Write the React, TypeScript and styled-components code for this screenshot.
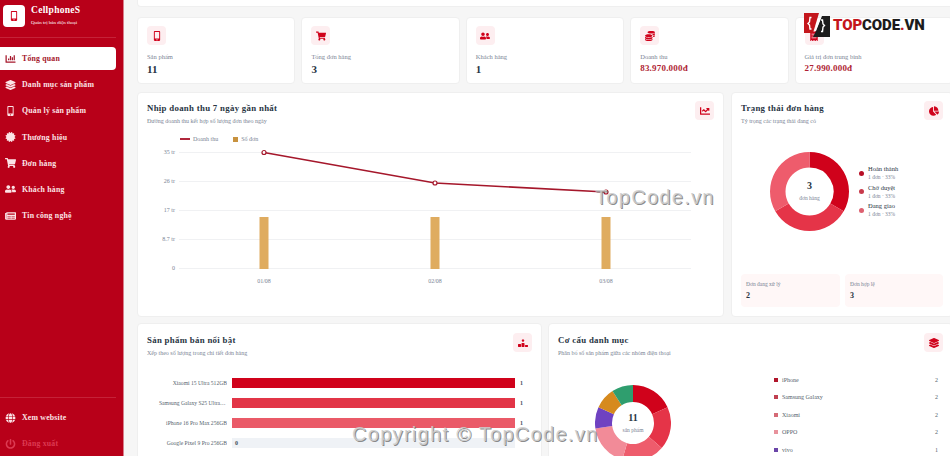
import { createGlobalStyle, styled } from 'styled-components';
import { ReactNode } from 'react';
import {
  FaChartBar, FaChartLine, FaChartPie, FaCoins, FaGlobe, FaLayerGroup, FaMobileAlt,
  FaNewspaper, FaPowerOff, FaShoppingCart, FaUserFriends, FaCertificate, FaReceipt,
} from 'react-icons/fa';
import { FaRankingStar } from 'react-icons/fa6';

const RED = '#d0021b';
const TEXT = '#283443';
const MUTED = '#7a8494';

const Global = createGlobalStyle`
  html, body { margin: 0; padding: 0; background: #f6f6f6; }
  * { box-sizing: border-box; }
  body { font-family: "Liberation Serif", "Noto Serif", serif; color: ${TEXT}; }
`;

const Page = styled.div`
  position: relative;
  width: 950px;
  height: 456px;
  overflow: hidden;
  display: flex;
  align-items: flex-start;
  background: #f6f6f6;
`;

const Sidebar = styled.aside`
  flex: 0 0 124px;
  height: 456px;
  background: #b80019;
  border-right: 1px solid #d8808c;
  display: flex;
  flex-direction: column;
  color: #fff;
`;
const Brand = styled.div`
  height: 38px;
  margin-right: 7px;
  padding: 5px 0 0 3px;
  display: flex;
  gap: 6px;
  border-bottom: 1px solid #c52238;
`;
const BrandIcon = styled.div`
  width: 22px;
  height: 22px;
  background: #fff;
  border-radius: 4px;
  color: ${RED};
  font-size: 10px;
  display: flex;
  align-items: center;
  justify-content: center;
`;
const BrandName = styled.div`
  font-size: 9.5px;
  font-weight: bold;
  letter-spacing: 0.3px;
  line-height: 11px;
`;
const BrandSub = styled.div`
  margin-top: 3px;
  font-size: 5px;
  line-height: 7px;
`;
const Nav = styled.nav`
  flex: 1;
  padding-top: 9px;
  display: flex;
  flex-direction: column;
  gap: 3.2px;
`;
const NavItem = styled.div<{ $active?: boolean; $dim?: boolean }>`
  width: 116px;
  height: 23px;
  padding-left: 5px;
  border-radius: 0 4px 4px 0;
  display: flex;
  align-items: center;
  gap: 6px;
  font-size: 7.8px;
  font-weight: bold;
  letter-spacing: 0.2px;
  background: ${(p) => (p.$active ? '#fff' : 'transparent')};
  color: ${(p) => (p.$active ? '#a5172b' : p.$dim ? '#dc3a52' : '#fbe3e6')};
  svg { flex: 0 0 11px; width: 11px; height: 10px; }
`;
const SideFoot = styled.div`
  margin-right: 7px;
  padding: 8px 0 1px;
  border-top: 1px solid #c52238;
  display: flex;
  flex-direction: column;
  gap: 3px;
`;

const Main = styled.main`
  flex: 0 0 816px;
  margin-left: 13px;
  display: flex;
  flex-direction: column;
`;
const Card = styled.section`
  flex: none;
  background: #fff;
  border: 1px solid #efefef;
  border-radius: 4px;
`;
const TopBar = styled(Card)`
  height: 7px;
  border-radius: 0 0 4px 4px;
  border-top: 0;
  margin-bottom: 10px;
`;
const StatGrid = styled.div`
  display: grid;
  grid-template-columns: repeat(5, 1fr);
  gap: 6px;
  margin-bottom: 8px;
`;
const StatCard = styled(Card)`
  height: 67px;
  padding: 8px 9px;
`;
const IconTile = styled.div`
  flex: none;
  width: 19px;
  height: 19px;
  background: #fdeef0;
  border-radius: 4px;
  color: ${RED};
  display: flex;
  align-items: center;
  justify-content: center;
  font-size: 10px;
`;
const StatLabel = styled.div`
  margin-top: 7px;
  font-size: 6.5px;
  line-height: 9px;
  color: ${MUTED};
`;
const StatValue = styled.div<{ $money?: boolean }>`
  margin-top: ${(p) => (p.$money ? 1 : 2)}px;
  font-size: ${(p) => (p.$money ? 9 : 11)}px;
  line-height: 12px;
  font-weight: bold;
  letter-spacing: 0.2px;
  color: ${(p) => (p.$money ? '#b01f35' : TEXT)};
`;
const ChartRow = styled.div`
  display: grid;
  grid-template-columns: 587px 222px;
  gap: 7px;
  margin-bottom: 6px;
`;
const ChartCard = styled(Card)`
  height: 225px;
  padding: 8px 9px 0;
  display: flex;
  flex-direction: column;
`;
const BottomRow = styled.div`
  display: grid;
  grid-template-columns: 405px 405px;
  gap: 6px;
`;
const BottomCard = styled(Card)`
  height: 160px;
  padding: 9px 9px 0;
`;
const CardHead = styled.header`
  display: flex;
  justify-content: space-between;
  align-items: flex-start;
`;
const CardTitle = styled.h2`
  margin: 1px 0 0;
  font-size: 8.8px;
  line-height: 12px;
  font-weight: bold;
  letter-spacing: 0.3px;
`;
const CardSub = styled.p`
  margin: 3px 0 0;
  font-size: 6px;
  line-height: 9px;
  color: ${MUTED};
`;
const Legend = styled.div`
  padding-left: 33px;
  margin-top: 8px;
  height: 10px;
  display: flex;
  align-items: center;
  gap: 15px;
`;
const LegendItem = styled.span`
  display: flex;
  align-items: center;
  gap: 3px;
  font-size: 6px;
  color: ${MUTED};
`;
const LineKey = styled.i`
  width: 10px;
  height: 2px;
  background: #b0283c;
`;
const SquareKey = styled.i<{ $color: string }>`
  width: 5px;
  height: 5px;
  background: ${(p) => p.$color};
`;
const ChartSvg = styled.svg`
  display: block;
  margin-left: -9px;
  flex: none;
`;
const AxisText = styled.text`
  font-size: 6px;
  fill: ${MUTED};
`;

const StatusBody = styled.div`
  flex: 1;
  display: flex;
  align-items: center;
  padding: 0 0 18px 29px;
`;
const DonutWrap = styled.div<{ $size: number }>`
  position: relative;
  flex: 0 0 ${(p) => p.$size}px;
  width: ${(p) => p.$size}px;
  height: ${(p) => p.$size}px;
`;
const DonutCentre = styled.div`
  position: absolute;
  inset: 0;
  display: flex;
  flex-direction: column;
  align-items: center;
  justify-content: center;
`;
const DonutNum = styled.b`
  font-size: 10px;
  line-height: 12px;
`;
const DonutCap = styled.span`
  margin-top: 3px;
  font-size: 5.5px;
  line-height: 7px;
  color: ${MUTED};
`;
const StatusList = styled.div`
  margin: 1px 0 0 10px;
  display: flex;
  flex-direction: column;
  gap: 2.5px;
`;
const StatusRow = styled.div`
  display: flex;
  align-items: center;
  gap: 4px;
`;
const Dot = styled.i<{ $color: string }>`
  width: 5px;
  height: 5px;
  border-radius: 50%;
  background: ${(p) => p.$color};
`;
const StatusName = styled.div`
  font-size: 6.5px;
  line-height: 8px;
`;
const StatusMeta = styled.div`
  font-size: 5.5px;
  line-height: 8px;
  color: ${MUTED};
`;
const MiniRow = styled.div`
  display: grid;
  grid-template-columns: 99px 98px;
  gap: 5px;
  margin: 0 0 9px;
`;
const MiniBox = styled.div`
  height: 33px;
  padding: 6px 5px;
  background: #fff7f7;
  border-radius: 4px;
`;
const MiniLabel = styled.div`
  font-size: 5.5px;
  line-height: 8px;
  color: ${MUTED};
`;
const MiniValue = styled.div`
  margin-top: 3px;
  font-size: 8px;
  line-height: 9px;
  font-weight: bold;
`;

const Bars = styled.div`
  margin-top: 20px;
  display: flex;
  flex-direction: column;
  gap: 10px;
`;
const BarRow = styled.div`
  display: grid;
  grid-template-columns: 80px 283px 1fr;
  gap: 5px;
  align-items: center;
  height: 10px;
`;
const BarLabel = styled.div`
  padding-left: 12px;
  font-size: 5.6px;
  text-align: right;
  white-space: nowrap;
  overflow: hidden;
  text-overflow: ellipsis;
  color: #555f6d;
`;
const BarTrack = styled.div`
  height: 10px;
  background: #eff2f6;
  display: flex;
  align-items: center;
`;
const BarFill = styled.div<{ $color: string }>`
  height: 10px;
  background: ${(p) => p.$color};
`;
const BarValue = styled.span`
  font-size: 6px;
  font-weight: bold;
  color: #444e5c;
`;
const BarZero = styled(BarValue)`
  margin-left: 3px;
`;

const MixBody = styled.div`
  display: flex;
  margin-top: 17px;
`;
const MixChart = styled.div`
  flex: 0 0 216px;
  padding: 10px 0 0 37px;
`;
const MixList = styled.div`
  flex: 1;
  padding-right: 5px;
  display: flex;
  flex-direction: column;
  gap: 7.4px;
`;
const MixRow = styled.div`
  height: 10px;
  display: flex;
  align-items: center;
  gap: 4px;
  font-size: 6px;
  color: #555f6d;
`;
const MixSwatch = styled.i<{ $color: string }>`
  width: 4px;
  height: 4px;
  background: ${(p) => p.$color};
`;
const MixCount = styled.span`
  margin-left: auto;
`;

const LogoMark = styled.div`
  position: absolute;
  left: 804px;
  top: 12px;
  display: flex;
  align-items: center;
  gap: 3px;
`;
const LogoText = styled.span`
  font-family: Roboto, "Liberation Sans", sans-serif;
  font-weight: 900;
  font-size: 15px;
  letter-spacing: -0.1px;
  color: #1c1c1c;
  b { color: #c4161c; font-weight: 900; }
`;
const Watermark = styled.div<{ $x: number; $y: number }>`
  position: absolute;
  left: ${(p) => p.$x}px;
  top: ${(p) => p.$y}px;
  font-family: "Liberation Sans", Arial, sans-serif;
  font-size: 20px;
  letter-spacing: 1.3px;
  line-height: 1.2;
  white-space: nowrap;
  color: rgba(205, 205, 205, 0.9);
  text-shadow: 1px 1px 0 rgba(110, 110, 110, 0.8);
`;

const polar = (cx: number, cy: number, r: number, deg: number) => {
  const a = ((deg - 90) * Math.PI) / 180;
  return [cx + r * Math.cos(a), cy + r * Math.sin(a)];
};

const Donut = ({ size, inner, parts, children }: { size: number; inner: number; parts: { v: number; c: string }[]; children: ReactNode }) => {
  const total = parts.reduce((s, p) => s + p.v, 0);
  const c = size / 2;
  let at = 0;
  return (
    <DonutWrap $size={size}>
      <svg width={size} height={size} viewBox={`0 0 ${size} ${size}`}>
        {parts.map((p, i) => {
          const from = at;
          at += (p.v / total) * 360;
          const [x1, y1] = polar(c, c, c, from);
          const [x2, y2] = polar(c, c, c, at);
          const [x3, y3] = polar(c, c, inner, at);
          const [x4, y4] = polar(c, c, inner, from);
          const large = at - from > 180 ? 1 : 0;
          return (
            <path
              key={i}
              fill={p.c}
              d={`M${x1} ${y1}A${c} ${c} 0 ${large} 1 ${x2} ${y2}L${x3} ${y3}A${inner} ${inner} 0 ${large} 0 ${x4} ${y4}Z`}
            />
          );
        })}
      </svg>
      <DonutCentre>{children}</DonutCentre>
    </DonutWrap>
  );
};

const TopcodeIcon = () => (
  <svg width="26" height="26" viewBox="0 0 26 26">
    <path d="M0 1H15L9 21H0Z" fill="#c4161c" />
    <path d="M18 4H26V25H9L12 19Z" fill="#1c1c1c" />
    <path d="M7.5 5.5H6L5.5 10L4 11.5L5.5 13L6 17H7.5" fill="none" stroke="#fff" strokeWidth="1.4" />
    <path d="M16 6L11 19" fill="none" stroke="#fff" strokeWidth="1.4" />
    <path d="M17 8H18.5L19 12L20.5 13.5L19 15L18.5 19.5H17" fill="none" stroke="#fff" strokeWidth="1.4" />
  </svg>
);

const RevenueChart = () => {
  const grid = [
    { y: 8, t: '35 tr' },
    { y: 37, t: '26 tr' },
    { y: 66, t: '17 tr' },
    { y: 95, t: '8.7 tr' },
    { y: 124, t: '0' },
  ];
  const pts = [
    { x: 126, y: 8.5, d: '01/08' },
    { x: 297, y: 39, d: '02/08' },
    { x: 468, y: 48, d: '03/08' },
  ];
  return (
    <ChartSvg width="587" height="150" viewBox="0 0 587 150">
      {grid.map((g) => (
        <g key={g.t}>
          <line x1="41" x2="553" y1={g.y + 0.5} y2={g.y + 0.5} stroke="#f0f1f3" />
          <AxisText x="37" y={g.y + 2} textAnchor="end">{g.t}</AxisText>
        </g>
      ))}
      {pts.map((p) => (
        <g key={p.d}>
          <rect x={p.x - 4.5} y="73" width="9" height="52" fill="#dfac60" />
          <AxisText x={p.x} y="139" textAnchor="middle">{p.d}</AxisText>
        </g>
      ))}
      <polyline points={pts.map((p) => `${p.x},${p.y}`).join(' ')} fill="none" stroke="#a5172b" strokeWidth="1.6" />
      {pts.map((p) => (
        <circle key={p.x} cx={p.x} cy={p.y} r="2" fill="#fff" stroke="#a5172b" strokeWidth="1.2" />
      ))}
    </ChartSvg>
  );
};

const stats = [
  { icon: <FaMobileAlt />, label: 'Sản phẩm', value: '11' },
  { icon: <FaShoppingCart />, label: 'Tổng đơn hàng', value: '3' },
  { icon: <FaUserFriends />, label: 'Khách hàng', value: '1' },
  { icon: <FaCoins />, label: 'Doanh thu', value: '83.970.000đ', money: true },
  { icon: <FaReceipt />, label: 'Giá trị đơn trung bình', value: '27.990.000đ', money: true },
];
const nav = [
  { icon: <FaChartBar />, label: 'Tổng quan', active: true },
  { icon: <FaLayerGroup />, label: 'Danh mục sản phẩm' },
  { icon: <FaMobileAlt />, label: 'Quản lý sản phẩm' },
  { icon: <FaCertificate />, label: 'Thương hiệu' },
  { icon: <FaShoppingCart />, label: 'Đơn hàng' },
  { icon: <FaUserFriends />, label: 'Khách hàng' },
  { icon: <FaNewspaper />, label: 'Tin công nghệ' },
];
const statusParts = [
  { v: 1, c: '#d0021b', name: 'Hoàn thành', dot: '#b80f26' },
  { v: 1, c: '#e53448', name: 'Chờ duyệt', dot: '#c83a4b' },
  { v: 1, c: '#ee5c6c', name: 'Đang giao', dot: '#dd6070' },
];
const topProducts = [
  { name: 'Xiaomi 15 Ultra 512GB', qty: 1, color: '#d0021b' },
  { name: 'Samsung Galaxy S25 Ultra 512GB', qty: 1, color: '#e23547' },
  { name: 'iPhone 16 Pro Max 256GB', qty: 1, color: '#ea5a68' },
  { name: 'Google Pixel 9 Pro 256GB', qty: 0, color: '#eff2f6' },
];
const mix = [
  { name: 'iPhone', v: 2, c: '#d0021b', key: '#b0142a' },
  { name: 'Samsung Galaxy', v: 2, c: '#e53448', key: '#c04050' },
  { name: 'Xiaomi', v: 2, c: '#ee5c6c', key: '#d56a76' },
  { name: 'OPPO', v: 2, c: '#f28b98', key: '#e8929c' },
  { name: 'vivo', v: 1, c: '#6f42c1', key: '#6a45a8' },
  { name: 'Realme', v: 1, c: '#d68a1e', key: '#d68a1e' },
  { name: 'Google', v: 1, c: '#2f9e6e', key: '#2f9e6e' },
];

export default function App() {
  return (
    <Page>
      <Global />
      <Sidebar>
        <Brand>
          <BrandIcon><FaMobileAlt /></BrandIcon>
          <div>
            <BrandName>CellphoneS</BrandName>
            <BrandSub>Quản trị bán điện thoại</BrandSub>
          </div>
        </Brand>
        <Nav>
          {nav.map((n) => (
            <NavItem key={n.label} $active={n.active}>{n.icon}{n.label}</NavItem>
          ))}
        </Nav>
        <SideFoot>
          <NavItem><FaGlobe />Xem website</NavItem>
          <NavItem $dim><FaPowerOff />Đăng xuất</NavItem>
        </SideFoot>
      </Sidebar>
      <Main>
        <TopBar />
        <StatGrid>
          {stats.map((s) => (
            <StatCard key={s.label}>
              <IconTile>{s.icon}</IconTile>
              <StatLabel>{s.label}</StatLabel>
              <StatValue $money={s.money}>{s.value}</StatValue>
            </StatCard>
          ))}
        </StatGrid>
        <ChartRow>
          <ChartCard>
            <CardHead>
              <div>
                <CardTitle>Nhịp doanh thu 7 ngày gần nhất</CardTitle>
                <CardSub>Đường doanh thu kết hợp số lượng đơn theo ngày</CardSub>
              </div>
              <IconTile><FaChartLine /></IconTile>
            </CardHead>
            <Legend>
              <LegendItem><LineKey />Doanh thu</LegendItem>
              <LegendItem><SquareKey $color="#c8923f" />Số đơn</LegendItem>
            </Legend>
            <RevenueChart />
          </ChartCard>
          <ChartCard>
            <CardHead>
              <div>
                <CardTitle>Trạng thái đơn hàng</CardTitle>
                <CardSub>Tỷ trọng các trạng thái đang có</CardSub>
              </div>
              <IconTile><FaChartPie /></IconTile>
            </CardHead>
            <StatusBody>
              <Donut size={79} inner={24} parts={statusParts}>
                <DonutNum>3</DonutNum>
                <DonutCap>đơn hàng</DonutCap>
              </Donut>
              <StatusList>
                {statusParts.map((s) => (
                  <StatusRow key={s.name}>
                    <Dot $color={s.dot} />
                    <div>
                      <StatusName>{s.name}</StatusName>
                      <StatusMeta>1 đơn · 33%</StatusMeta>
                    </div>
                  </StatusRow>
                ))}
              </StatusList>
            </StatusBody>
            <MiniRow>
              <MiniBox><MiniLabel>Đơn đang xử lý</MiniLabel><MiniValue>2</MiniValue></MiniBox>
              <MiniBox><MiniLabel>Đơn hợp lệ</MiniLabel><MiniValue>3</MiniValue></MiniBox>
            </MiniRow>
          </ChartCard>
        </ChartRow>
        <BottomRow>
          <BottomCard>
            <CardHead>
              <div>
                <CardTitle>Sản phẩm bán nổi bật</CardTitle>
                <CardSub>Xếp theo số lượng trong chi tiết đơn hàng</CardSub>
              </div>
              <IconTile><FaRankingStar /></IconTile>
            </CardHead>
            <Bars>
              {topProducts.map((p) => (
                <BarRow key={p.name}>
                  <BarLabel>{p.name}</BarLabel>
                  <BarTrack>
                    {p.qty > 0 ? <BarFill $color={p.color} style={{ width: '100%' }} /> : <BarZero>0</BarZero>}
                  </BarTrack>
                  {p.qty > 0 && <BarValue>{p.qty}</BarValue>}
                </BarRow>
              ))}
            </Bars>
          </BottomCard>
          <BottomCard>
            <CardHead>
              <div>
                <CardTitle>Cơ cấu danh mục</CardTitle>
                <CardSub>Phân bổ số sản phẩm giữa các nhóm điện thoại</CardSub>
              </div>
              <IconTile><FaLayerGroup /></IconTile>
            </CardHead>
            <MixBody>
              <MixChart>
                <Donut size={76} inner={21} parts={mix}>
                  <DonutNum>11</DonutNum>
                  <DonutCap>sản phẩm</DonutCap>
                </Donut>
              </MixChart>
              <MixList>
                {mix.map((m) => (
                  <MixRow key={m.name}>
                    <MixSwatch $color={m.key} />
                    {m.name}
                    <MixCount>{m.v}</MixCount>
                  </MixRow>
                ))}
              </MixList>
            </MixBody>
          </BottomCard>
        </BottomRow>
      </Main>
      <LogoMark>
        <TopcodeIcon />
        <LogoText><b>TOP</b>CODE<b>.</b>VN</LogoText>
      </LogoMark>
      <Watermark $x={595} $y={185}>TopCode.vn</Watermark>
      <Watermark $x={352} $y={422}>Copyright © TopCode.vn</Watermark>
    </Page>
  );
}
